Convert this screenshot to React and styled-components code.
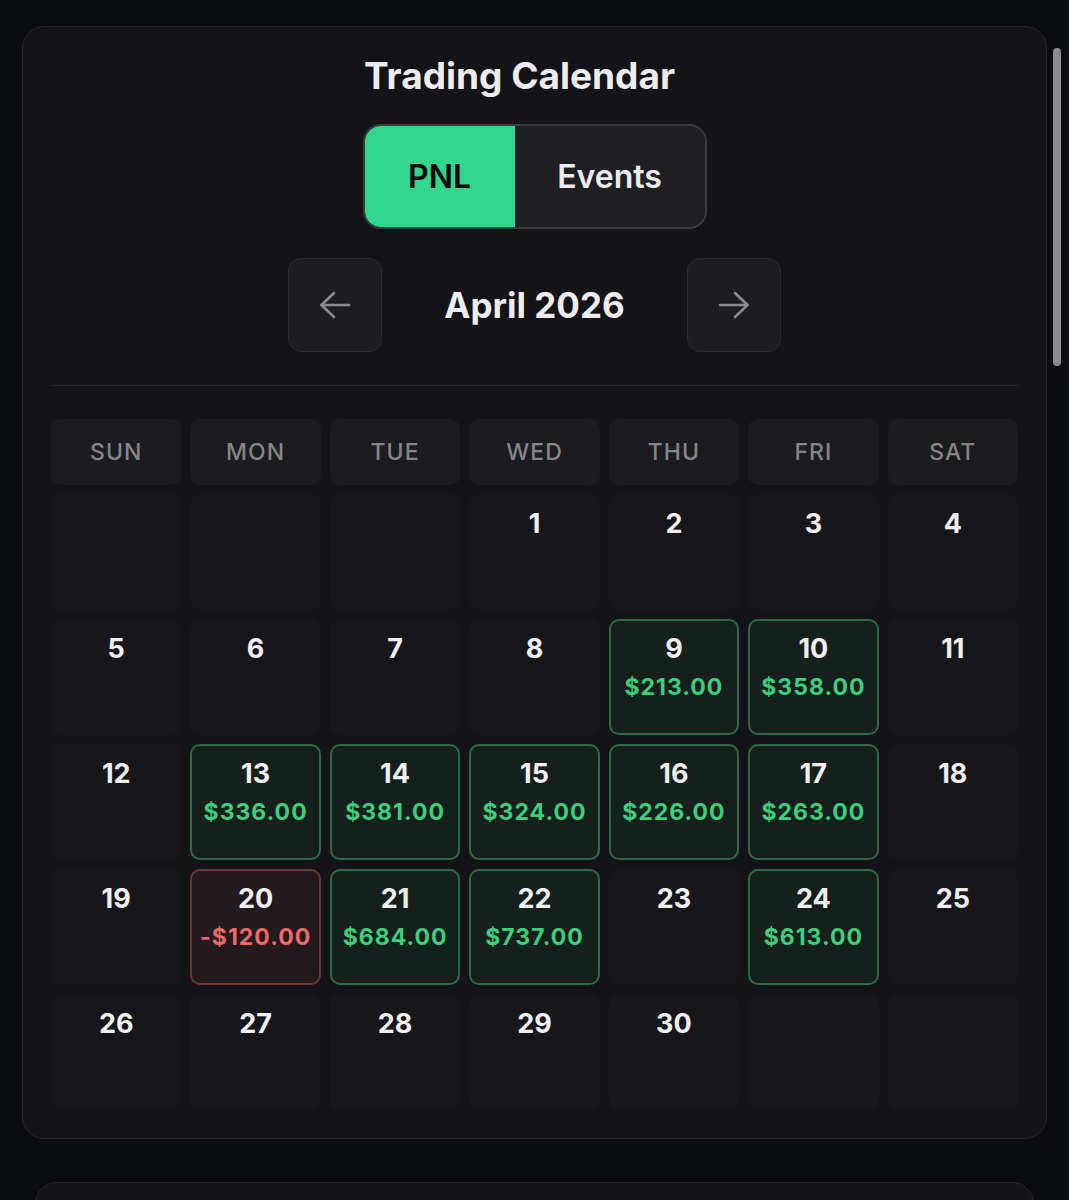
import React, { useState } from 'react';
import styled, { createGlobalStyle } from 'styled-components';

const GlobalStyle = createGlobalStyle`
  html, body {
    margin: 0;
    padding: 0;
    background: #0b0c10;
    height: 1200px;
    overflow: hidden;
  }
  * { box-sizing: border-box; }
  body {
    font-family: Inter, "Noto Sans", "Liberation Sans", sans-serif;
    color: #ededf0;
  }
`

const Page = styled.div`
  position: relative;
  padding: 26px 22px 0 22px;
`
const Card = styled.div`
  background: #131318;
  border: 1px solid #26262c;
  border-radius: 22px;
  padding: 28px;
  display: flex;
  flex-direction: column;
  align-items: center;
`
const NextCard = styled.div`
  margin: 43px 13px 0 13px;
  height: 120px;
  background: #131318;
  border: 1px solid #26262c;
  border-radius: 22px;
`
const Title = styled.h1`
  margin: 0;
  padding-right: 30px;
  font-size: 37px;
  line-height: 42px;
  font-weight: 700;
  color: #ededf0;
`
const Toggle = styled.div`
  margin-top: 27px;
  display: flex;
  border: 2px solid #3a3a40;
  border-radius: 18px;
  overflow: hidden;
  background: #1f1f24;
`
const ToggleButton = styled.button`
  width: ${p => p.w}px;
  height: 101px;
  border: none;
  margin: 0;
  font-family: inherit;
  font-size: 32px;
  font-weight: 600;
  background: ${p => (p.active ? '#33d68d' : '#1f1f24')};
  color: ${p => (p.active ? '#0a0a0c' : '#ececef')};
  cursor: pointer;
`
const MonthNav = styled.div`
  margin-top: 29px;
  width: 493px;
  display: flex;
  align-items: center;
`
const NavButton = styled.button`
  width: 94px;
  height: 94px;
  border-radius: 13px;
  background: #1c1c21;
  border: 1px solid #2a2a30;
  display: flex;
  align-items: center;
  justify-content: center;
  padding: 0;
  cursor: pointer;
`
const MonthLabel = styled.div`
  flex: 1;
  text-align: center;
  font-size: 35px;
  font-weight: 700;
  color: #ededf0;
`
const Divider = styled.div`
  align-self: stretch;
  margin-top: 33px;
  height: 1px;
  background: #26262c;
`
const Grid = styled.div`
  align-self: stretch;
  margin-top: 33px;
  display: grid;
  grid-template-columns: repeat(7, 1fr);
  grid-template-rows: 65.5px;
  grid-auto-rows: 116px;
  column-gap: 9px;
  row-gap: 9px;
`
const HeadCell = styled.div`
  background: #1b1b20;
  border-radius: 10px;
  display: flex;
  align-items: center;
  justify-content: center;
  font-size: 23px;
  font-weight: 500;
  letter-spacing: 1px;
  color: #85858b;
`
const DayCell = styled.div`
  border-radius: 10px;
  padding-top: ${p => (p.tone ? 13 : 15)}px;
  display: flex;
  flex-direction: column;
  align-items: center;
  background: ${p => (p.tone === 'up' ? '#15201c' : p.tone === 'down' ? '#231a1e' : '#17171b')};
  border: ${p => (p.tone === 'up' ? '2px solid #2d6a48' : p.tone === 'down' ? '2px solid #6f3539' : 'none')};
`
const DayNum = styled.div`
  font-size: 27px;
  line-height: 30px;
  font-weight: 700;
  color: #f0f0f2;
`
const Pnl = styled.div`
  margin-top: 8px;
  font-size: 23px;
  line-height: 30px;
  font-weight: 700;
  letter-spacing: 1px;
  color: ${p => (p.neg ? '#f06868' : '#3ccf7d')};
`
const ScrollThumb = styled.div`
  position: absolute;
  top: 48px;
  right: 8px;
  width: 8px;
  height: 318px;
  border-radius: 4px;
  background: #8c8c90;
`

const Arrow = ({ dir }) => (
  <svg width="32" height="28" viewBox="0 0 32 28" fill="none"
    stroke="#8b8b90" strokeWidth="2.6" strokeLinecap="round" strokeLinejoin="round"
    style={{ transform: dir === 'right' ? 'scaleX(-1)' : 'none' }}>
    <path d="M30 14H2.5" />
    <path d="M15 2L2.5 14L15 26" />
  </svg>
)

const DAYS = ['SUN', 'MON', 'TUE', 'WED', 'THU', 'FRI', 'SAT'];

const pnl = {
  9: 213, 10: 358, 13: 336, 14: 381, 15: 324, 16: 226, 17: 263,
  20: -120, 21: 684, 22: 737, 24: 613,
};

const fmt = v => (v < 0 ? '-$' : '$') + Math.abs(v).toFixed(2);

export default function App() {
  const [mode, setMode] = useState('pnl');
  const cells = [];
  for (let i = 0; i < 3; i++) cells.push(null);
  for (let d = 1; d <= 30; d++) cells.push(d);
  while (cells.length < 35) cells.push(null);

  return (
    <Page>
      <GlobalStyle />
      <Card>
        <Title>Trading Calendar</Title>
        <Toggle>
          <ToggleButton w={150} active={mode === 'pnl'} onClick={() => setMode('pnl')}>PNL</ToggleButton>
          <ToggleButton w={190} active={mode === 'events'} onClick={() => setMode('events')}>Events</ToggleButton>
        </Toggle>
        <MonthNav>
          <NavButton><Arrow dir="left" /></NavButton>
          <MonthLabel>April 2026</MonthLabel>
          <NavButton><Arrow dir="right" /></NavButton>
        </MonthNav>
        <Divider />
        <Grid>
          {DAYS.map(d => <HeadCell key={d}>{d}</HeadCell>)}
          {cells.map((d, i) => {
            const v = d ? pnl[d] : undefined;
            const tone = v === undefined ? null : v < 0 ? 'down' : 'up';
            return (
              <DayCell key={i} tone={tone}>
                {d && <DayNum>{d}</DayNum>}
                {v !== undefined && <Pnl neg={v < 0}>{fmt(v)}</Pnl>}
              </DayCell>
            );
          })}
        </Grid>
      </Card>
      <NextCard />
      <ScrollThumb />
    </Page>
  );
}
